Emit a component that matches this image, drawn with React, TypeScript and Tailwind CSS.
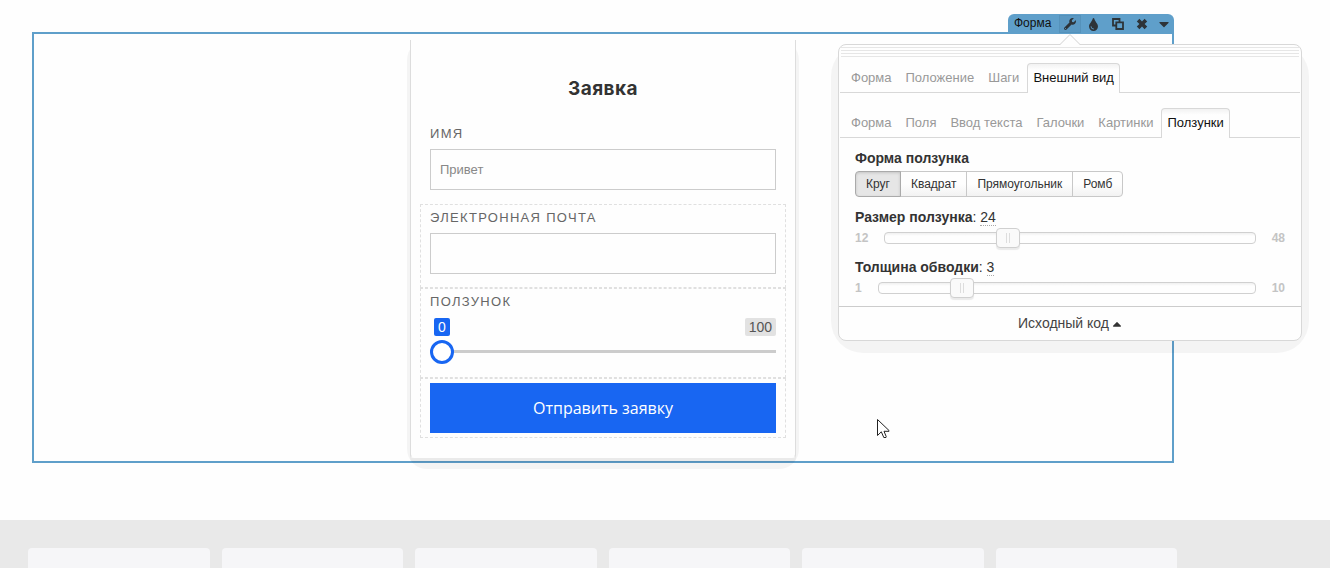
import React, { useState } from 'react';
import { FaCaretDown, FaCaretUp, FaTint, FaWrench } from 'react-icons/fa';
import clsx from 'clsx';

// --- Data ---
const MAIN_TABS = ['Форма', 'Положение', 'Шаги', 'Внешний вид'];
const STYLE_TABS = ['Форма', 'Поля', 'Ввод текста', 'Галочки', 'Картинки', 'Ползунки'];
const SHAPES = ['Круг', 'Квадрат', 'Прямоугольник', 'Ромб'];
const THUMBNAILS = [1, 2, 3, 4, 5, 6];

// --- Icons ---
const CopyIcon = () => (
  <svg width="12" height="12" viewBox="0 0 12 12" fill="none" stroke="currentColor" strokeWidth="1.8" aria-hidden="true">
    <path d="M4 7.5H1V1H7.5V4" />
    <path d="M4.3 4.3H11V11H4.3Z" />
  </svg>
);

const RemoveIcon = () => (
  <svg width="12" height="12" viewBox="0 0 12 12" fill="currentColor" aria-hidden="true">
    <path d="M3.4 0.8 6 3.4 8.6 0.8 11.2 3.4 8.6 6 11.2 8.6 8.6 11.2 6 8.6 3.4 11.2 0.8 8.6 3.4 6 0.8 3.4Z" />
  </svg>
);

// --- Toolbar over the selected block ---
const BlockToolbar = () => (
  <div className="absolute -top-5 -right-0.5 flex h-5 items-center rounded-t-md bg-[#5f9fca] pl-1.5 text-[#2d3338]">
    <span className="mr-2 w-[37px] pb-0.5 text-xs leading-4 text-[#111]">Форма</span>
    <button aria-label="Настройки" className="flex h-[18px] w-[22px] items-center justify-center border border-[#5592bb] bg-[#5b98c2]">
      <FaWrench size={12} />
    </button>
    <button aria-label="Цвет" className="flex w-6 justify-center">
      <FaTint size={13} />
    </button>
    <button aria-label="Копировать" className="flex w-[26px] justify-center">
      <CopyIcon />
    </button>
    <button aria-label="Удалить" className="flex w-[22px] justify-center">
      <RemoveIcon />
    </button>
    <button aria-label="Ещё" className="flex w-[21px] justify-center">
      <FaCaretDown size={16} />
    </button>
  </div>
);

// --- Form parts ---
interface FieldProps {
  id: string;
  label: string;
  outlined?: boolean;
  children: React.ReactNode;
}

const Field = ({ id, label, outlined = true, children }: FieldProps) => (
  <div className={clsx('border border-dashed px-[9px] pt-1 pb-[13px]', outlined ? 'border-[#e0e0e0]' : 'border-transparent')}>
    <label htmlFor={id} className="block text-[13px] leading-[17px] tracking-widest text-[#666] uppercase">
      {label}
    </label>
    {children}
  </div>
);

const inputClass =
  'mt-[7px] block h-[41px] w-full border border-[#ccc] bg-transparent px-[9px] text-[13px] text-[#333] placeholder:text-[#888] outline-none';

const RequestForm = () => {
  const [amount, setAmount] = useState(0);

  return (
    <div className="relative mx-auto w-[386px]">
      {/* soft outer edge of the card */}
      <div className="absolute -inset-x-[3px] top-0 -bottom-[11px] rounded-[20px] bg-black/4" />
      <form
        onSubmit={(e) => e.preventDefault()}
        className="relative rounded-b border border-t-0 border-[#ddd] border-b-transparent bg-[#fefefe] px-[9px] pb-[19px] shadow-[0_4px_0_0_rgba(0,0,0,0.04)]"
      >
        <h2 className="pt-[33px] pb-[15px] text-center font-[Inter,sans-serif] text-[19px] leading-8 font-bold tracking-wide text-[#333]">
          Заявка
        </h2>

        <Field id="name" label="Имя" outlined={false}>
          <input id="name" type="text" placeholder="Привет" className={inputClass} />
        </Field>

        <Field id="email" label="Электронная почта">
          <input id="email" type="email" className={inputClass} />
        </Field>

        <Field id="amount" label="Ползунок">
          <div className="mt-2 flex justify-between pl-1 text-sm leading-[18px]">
            <span className="rounded-xs bg-[#1866f2] px-1 text-white">{amount}</span>
            <span className="rounded-xs bg-[#e2e2e2] px-1 text-[#555]">100</span>
          </div>
          <input
            id="amount"
            type="range"
            min={0}
            max={100}
            value={amount}
            onChange={(e) => setAmount(Number(e.target.value))}
            className="mt-[3px] mb-px block h-6 w-full appearance-none bg-transparent [&::-webkit-slider-runnable-track]:h-[3px] [&::-webkit-slider-runnable-track]:bg-[#ccc] [&::-webkit-slider-thumb]:-mt-[10px] [&::-webkit-slider-thumb]:size-6 [&::-webkit-slider-thumb]:appearance-none [&::-webkit-slider-thumb]:rounded-full [&::-webkit-slider-thumb]:border-3 [&::-webkit-slider-thumb]:border-[#1866f2] [&::-webkit-slider-thumb]:bg-white"
          />
        </Field>

        <div className="border border-dashed border-[#e0e0e0] px-[9px] py-1">
          <button type="submit" className="h-[50px] w-full bg-[#1866f2] font-['Open_Sans',sans-serif] text-base font-medium text-white">
            Отправить заявку
          </button>
        </div>
      </form>
    </div>
  );
};

// --- Settings panel ---
interface TabsProps {
  items: string[];
  active: string;
  onSelect: (item: string) => void;
}

const Tabs = ({ items, active, onSelect }: TabsProps) => (
  <div role="tablist" className="mx-px flex h-[30px] gap-0.5 border-b border-[#d8d8d8] pl-[5px]">
    {items.map((item) => (
      <button
        key={item}
        role="tab"
        aria-selected={item === active}
        onClick={() => onSelect(item)}
        className={clsx(
          'h-[30px] rounded-t border border-b-0 px-[5px] pb-0.5 text-[13px] leading-4 whitespace-nowrap',
          item === active
            ? 'border-[#d8d8d8] bg-linear-to-b from-[#f2f2f2] to-[#fefefe] to-20% text-[#111]'
            : 'border-transparent text-[#999]'
        )}
      >
        {item}
      </button>
    ))}
  </div>
);

interface SettingSliderProps {
  id: string;
  label: string;
  min: number;
  max: number;
  initial: number;
}

const SettingSlider = ({ id, label, min, max, initial }: SettingSliderProps) => {
  const [value, setValue] = useState(initial);

  return (
    <div className="mt-[9px]">
      <label htmlFor={id} className="block text-sm leading-5 text-[#333]">
        <b>{label}</b>: <span className="inline-block border-b border-dotted border-[#aaa] leading-4">{value}</span>
      </label>
      <div className="mt-px flex h-5 items-center text-xs font-bold text-[#c4c4c4]">
        <span>{min}</span>
        <div className="mx-4 flex h-3 min-w-0 flex-1 items-center rounded border border-[#d0d0d0] bg-linear-to-b from-[#f0f0f0] to-[#fefefe] to-30%">
          <input
            id={id}
            type="range"
            min={min}
            max={max}
            value={value}
            onChange={(e) => setValue(Number(e.target.value))}
            className="-mx-3 h-5 w-[calc(100%+24px)] shrink-0 appearance-none bg-transparent [&::-webkit-slider-thumb]:h-5 [&::-webkit-slider-thumb]:w-6 [&::-webkit-slider-thumb]:appearance-none [&::-webkit-slider-thumb]:rounded [&::-webkit-slider-thumb]:border [&::-webkit-slider-thumb]:border-[#d0d0d0] [&::-webkit-slider-thumb]:bg-[#fafafa] [&::-webkit-slider-thumb]:bg-[linear-gradient(90deg,transparent_9px,#ddd_9px,#ddd_10px,transparent_10px,transparent_12px,#ddd_12px,#ddd_13px,transparent_13px)] [&::-webkit-slider-thumb]:bg-[length:100%_10px] [&::-webkit-slider-thumb]:bg-center [&::-webkit-slider-thumb]:bg-no-repeat [&::-webkit-slider-thumb]:shadow-[0_2px_1px_rgba(0,0,0,0.08)]"
          />
        </div>
        <span>{max}</span>
      </div>
    </div>
  );
};

const SettingsPanel = () => {
  const [mainTab, setMainTab] = useState('Внешний вид');
  const [styleTab, setStyleTab] = useState('Ползунки');
  const [shape, setShape] = useState('Круг');

  return (
    <div className="absolute top-2.5 -right-[130px] w-[464px]">
      {/* soft outer edge of the panel */}
      <div className="absolute -inset-x-[7px] top-0 -bottom-3 rounded-[32px] bg-black/4" />

      <div className="relative rounded-lg border border-[#d8d8d8] bg-[#fefefe]">
        {/* pointer to the wrench button */}
        <svg className="absolute -top-[11px] left-[220px]" width="22" height="12" viewBox="0 0 22 12" aria-hidden="true">
          <path d="M0.5 11 11 0.5 21.5 11V12H0.5Z" fill="#fefefe" />
          <path d="M0.5 11 11 0.5 21.5 11" fill="none" stroke="#d0d0d0" />
        </svg>

        <div className="mx-0.5 h-3 bg-[repeating-linear-gradient(180deg,transparent_0,transparent_2px,#e6e6e6_2px,#e6e6e6_3px)]" />

        <div className="flex flex-col gap-[15px] pt-1.5">
          <Tabs items={MAIN_TABS} active={mainTab} onSelect={setMainTab} />
          <Tabs items={STYLE_TABS} active={styleTab} onSelect={setStyleTab} />
        </div>

        <div className="px-4 pt-2.5 pb-2">
          <h3 className="text-sm leading-5 font-bold text-[#333]">Форма ползунка</h3>
          <div className="mt-[3px] flex pb-px">
            {SHAPES.map((item) => (
              <button
                key={item}
                aria-pressed={item === shape}
                onClick={() => setShape(item)}
                className={clsx(
                  '-ml-px h-[26px] border px-2.5 text-xs text-[#333] first:ml-0 first:rounded-l-sm last:rounded-r-sm',
                  item === shape
                    ? 'relative border-[#aaa] bg-[#e6e6e6] shadow-[inset_0_1px_3px_rgba(0,0,0,0.15)]'
                    : 'border-[#c8c8c8] bg-linear-to-b from-[#fefefe] from-50% to-[#f2f2f2]'
                )}
              >
                {item}
              </button>
            ))}
          </div>
          <SettingSlider id="thumb-size" label="Размер ползунка" min={12} max={48} initial={24} />
          <SettingSlider id="thumb-border" label="Толщина обводки" min={1} max={10} initial={3} />
        </div>

        <button className="flex h-[34px] w-full items-center justify-center border-t border-[#ccc] pb-0.5 pl-0.5 text-sm text-[#444]">
          Исходный код <FaCaretUp size={14} className="mt-0.5 ml-px text-[#333]" />
        </button>
      </div>
    </div>
  );
};

const App = () => (
  <div className="flex min-h-screen flex-col overflow-hidden bg-[#fefefe] font-['Liberation_Sans',Arial,sans-serif]">
    <main className="pt-8 pr-[156px] pb-[57px] pl-8">
      <section className="relative border-2 border-[#5f9fca] pt-1.5 pb-[3px]">
        <RequestForm />
        <BlockToolbar />
        <SettingsPanel />
        {/* mouse pointer */}
        <svg className="pointer-events-none absolute right-[282px] bottom-[22px]" width="13" height="20" viewBox="0 0 13 20" aria-hidden="true">
          <path d="M0.5 0.5V16.5L4.3 12.8 6.8 18.5H9L9.2 17.5 7 12.3H12V11.5Z" fill="#fff" stroke="#222" />
        </svg>
      </section>
    </main>

    <footer className="grid flex-1 grid-cols-6 gap-3 bg-[#e9e9e9] pt-7 pr-[153px] pl-7">
      {THUMBNAILS.map((n) => (
        <div key={n} className="min-h-5 rounded-t bg-[#f6f6f8]" />
      ))}
    </footer>
  </div>
);

export default App;
